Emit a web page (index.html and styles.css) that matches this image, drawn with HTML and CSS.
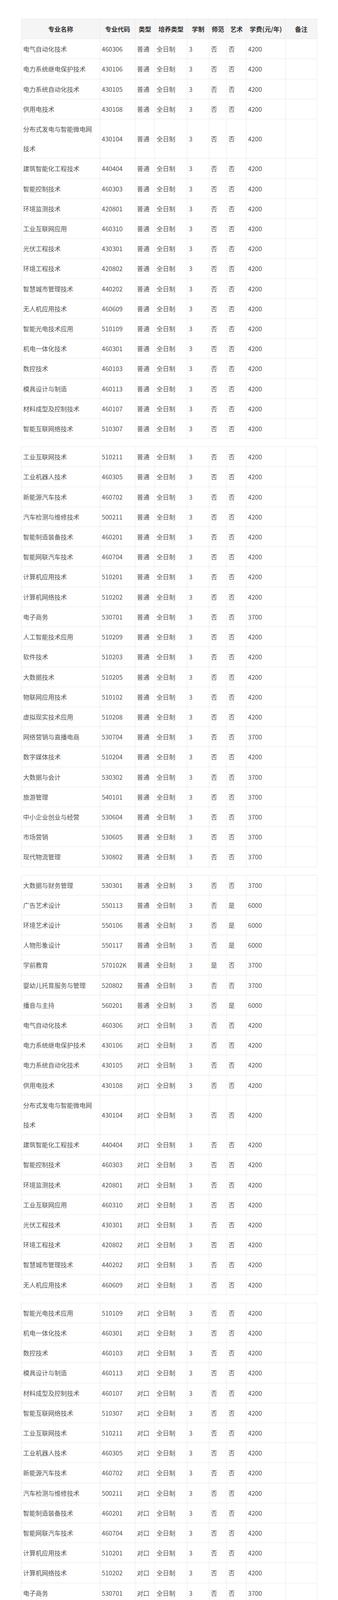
FILE: index.html
```html
<!DOCTYPE html>
<html lang="zh-CN">
<head>
<meta charset="utf-8">
<title>专业列表</title>
<link rel="stylesheet" href="styles.css">
</head>
<body>
<div class="page">

<table class="grid">
<colgroup><col class="c1"><col class="c2"><col class="c3"><col class="c4"><col class="c5"><col class="c6"><col class="c7"><col class="c8"><col class="c9"></colgroup>
<thead><tr><th>专业名称</th><th>专业代码</th><th>类型</th><th>培养类型</th><th>学制</th><th>师范</th><th>艺术</th><th>学费(元/年)</th><th>备注</th></tr></thead>
<tbody>
<tr><td>电气自动化技术</td><td>460306</td><td>普通</td><td>全日制</td><td>3</td><td>否</td><td>否</td><td>4200</td><td></td></tr>
<tr><td>电力系统继电保护技术</td><td>430106</td><td>普通</td><td>全日制</td><td>3</td><td>否</td><td>否</td><td>4200</td><td></td></tr>
<tr><td>电力系统自动化技术</td><td>430105</td><td>普通</td><td>全日制</td><td>3</td><td>否</td><td>否</td><td>4200</td><td></td></tr>
<tr><td>供用电技术</td><td>430108</td><td>普通</td><td>全日制</td><td>3</td><td>否</td><td>否</td><td>4200</td><td></td></tr>
<tr><td>分布式发电与智能微电网技术</td><td>430104</td><td>普通</td><td>全日制</td><td>3</td><td>否</td><td>否</td><td>4200</td><td></td></tr>
<tr><td>建筑智能化工程技术</td><td>440404</td><td>普通</td><td>全日制</td><td>3</td><td>否</td><td>否</td><td>4200</td><td></td></tr>
<tr><td>智能控制技术</td><td>460303</td><td>普通</td><td>全日制</td><td>3</td><td>否</td><td>否</td><td>4200</td><td></td></tr>
<tr><td>环境监测技术</td><td>420801</td><td>普通</td><td>全日制</td><td>3</td><td>否</td><td>否</td><td>4200</td><td></td></tr>
<tr><td>工业互联网应用</td><td>460310</td><td>普通</td><td>全日制</td><td>3</td><td>否</td><td>否</td><td>4200</td><td></td></tr>
<tr><td>光伏工程技术</td><td>430301</td><td>普通</td><td>全日制</td><td>3</td><td>否</td><td>否</td><td>4200</td><td></td></tr>
<tr><td>环境工程技术</td><td>420802</td><td>普通</td><td>全日制</td><td>3</td><td>否</td><td>否</td><td>4200</td><td></td></tr>
<tr><td>智慧城市管理技术</td><td>440202</td><td>普通</td><td>全日制</td><td>3</td><td>否</td><td>否</td><td>4200</td><td></td></tr>
<tr><td>无人机应用技术</td><td>460609</td><td>普通</td><td>全日制</td><td>3</td><td>否</td><td>否</td><td>4200</td><td></td></tr>
<tr><td>智能光电技术应用</td><td>510109</td><td>普通</td><td>全日制</td><td>3</td><td>否</td><td>否</td><td>4200</td><td></td></tr>
<tr><td>机电一体化技术</td><td>460301</td><td>普通</td><td>全日制</td><td>3</td><td>否</td><td>否</td><td>4200</td><td></td></tr>
<tr><td>数控技术</td><td>460103</td><td>普通</td><td>全日制</td><td>3</td><td>否</td><td>否</td><td>4200</td><td></td></tr>
<tr><td>模具设计与制造</td><td>460113</td><td>普通</td><td>全日制</td><td>3</td><td>否</td><td>否</td><td>4200</td><td></td></tr>
<tr><td>材料成型及控制技术</td><td>460107</td><td>普通</td><td>全日制</td><td>3</td><td>否</td><td>否</td><td>4200</td><td></td></tr>
<tr><td>智能互联网络技术</td><td>510307</td><td>普通</td><td>全日制</td><td>3</td><td>否</td><td>否</td><td>4200</td><td></td></tr>
</tbody>
</table>

<table class="grid">
<colgroup><col class="c1"><col class="c2"><col class="c3"><col class="c4"><col class="c5"><col class="c6"><col class="c7"><col class="c8"><col class="c9"></colgroup>
<tbody>
<tr><td>工业互联网技术</td><td>510211</td><td>普通</td><td>全日制</td><td>3</td><td>否</td><td>否</td><td>4200</td><td></td></tr>
<tr><td>工业机器人技术</td><td>460305</td><td>普通</td><td>全日制</td><td>3</td><td>否</td><td>否</td><td>4200</td><td></td></tr>
<tr><td>新能源汽车技术</td><td>460702</td><td>普通</td><td>全日制</td><td>3</td><td>否</td><td>否</td><td>4200</td><td></td></tr>
<tr><td>汽车检测与维修技术</td><td>500211</td><td>普通</td><td>全日制</td><td>3</td><td>否</td><td>否</td><td>4200</td><td></td></tr>
<tr><td>智能制造装备技术</td><td>460201</td><td>普通</td><td>全日制</td><td>3</td><td>否</td><td>否</td><td>4200</td><td></td></tr>
<tr><td>智能网联汽车技术</td><td>460704</td><td>普通</td><td>全日制</td><td>3</td><td>否</td><td>否</td><td>4200</td><td></td></tr>
<tr><td>计算机应用技术</td><td>510201</td><td>普通</td><td>全日制</td><td>3</td><td>否</td><td>否</td><td>4200</td><td></td></tr>
<tr><td>计算机网络技术</td><td>510202</td><td>普通</td><td>全日制</td><td>3</td><td>否</td><td>否</td><td>4200</td><td></td></tr>
<tr><td>电子商务</td><td>530701</td><td>普通</td><td>全日制</td><td>3</td><td>否</td><td>否</td><td>3700</td><td></td></tr>
<tr><td>人工智能技术应用</td><td>510209</td><td>普通</td><td>全日制</td><td>3</td><td>否</td><td>否</td><td>4200</td><td></td></tr>
<tr><td>软件技术</td><td>510203</td><td>普通</td><td>全日制</td><td>3</td><td>否</td><td>否</td><td>4200</td><td></td></tr>
<tr><td>大数据技术</td><td>510205</td><td>普通</td><td>全日制</td><td>3</td><td>否</td><td>否</td><td>4200</td><td></td></tr>
<tr><td>物联网应用技术</td><td>510102</td><td>普通</td><td>全日制</td><td>3</td><td>否</td><td>否</td><td>4200</td><td></td></tr>
<tr><td>虚拟现实技术应用</td><td>510208</td><td>普通</td><td>全日制</td><td>3</td><td>否</td><td>否</td><td>4200</td><td></td></tr>
<tr><td>网络营销与直播电商</td><td>530704</td><td>普通</td><td>全日制</td><td>3</td><td>否</td><td>否</td><td>3700</td><td></td></tr>
<tr><td>数字媒体技术</td><td>510204</td><td>普通</td><td>全日制</td><td>3</td><td>否</td><td>否</td><td>4200</td><td></td></tr>
<tr><td>大数据与会计</td><td>530302</td><td>普通</td><td>全日制</td><td>3</td><td>否</td><td>否</td><td>3700</td><td></td></tr>
<tr><td>旅游管理</td><td>540101</td><td>普通</td><td>全日制</td><td>3</td><td>否</td><td>否</td><td>3700</td><td></td></tr>
<tr><td>中小企业创业与经营</td><td>530604</td><td>普通</td><td>全日制</td><td>3</td><td>否</td><td>否</td><td>3700</td><td></td></tr>
<tr><td>市场营销</td><td>530605</td><td>普通</td><td>全日制</td><td>3</td><td>否</td><td>否</td><td>3700</td><td></td></tr>
<tr><td>现代物流管理</td><td>530802</td><td>普通</td><td>全日制</td><td>3</td><td>否</td><td>否</td><td>3700</td><td></td></tr>
</tbody>
</table>

<table class="grid">
<colgroup><col class="c1"><col class="c2"><col class="c3"><col class="c4"><col class="c5"><col class="c6"><col class="c7"><col class="c8"><col class="c9"></colgroup>
<tbody>
<tr><td>大数据与财务管理</td><td>530301</td><td>普通</td><td>全日制</td><td>3</td><td>否</td><td>否</td><td>3700</td><td></td></tr>
<tr><td>广告艺术设计</td><td>550113</td><td>普通</td><td>全日制</td><td>3</td><td>否</td><td>是</td><td>6000</td><td></td></tr>
<tr><td>环境艺术设计</td><td>550106</td><td>普通</td><td>全日制</td><td>3</td><td>否</td><td>是</td><td>6000</td><td></td></tr>
<tr><td>人物形象设计</td><td>550117</td><td>普通</td><td>全日制</td><td>3</td><td>否</td><td>是</td><td>6000</td><td></td></tr>
<tr><td>学前教育</td><td>570102K</td><td>普通</td><td>全日制</td><td>3</td><td>是</td><td>否</td><td>3700</td><td></td></tr>
<tr><td>婴幼儿托育服务与管理</td><td>520802</td><td>普通</td><td>全日制</td><td>3</td><td>否</td><td>否</td><td>3700</td><td></td></tr>
<tr><td>播音与主持</td><td>560201</td><td>普通</td><td>全日制</td><td>3</td><td>否</td><td>是</td><td>6000</td><td></td></tr>
<tr><td>电气自动化技术</td><td>460306</td><td>对口</td><td>全日制</td><td>3</td><td>否</td><td>否</td><td>4200</td><td></td></tr>
<tr><td>电力系统继电保护技术</td><td>430106</td><td>对口</td><td>全日制</td><td>3</td><td>否</td><td>否</td><td>4200</td><td></td></tr>
<tr><td>电力系统自动化技术</td><td>430105</td><td>对口</td><td>全日制</td><td>3</td><td>否</td><td>否</td><td>4200</td><td></td></tr>
<tr><td>供用电技术</td><td>430108</td><td>对口</td><td>全日制</td><td>3</td><td>否</td><td>否</td><td>4200</td><td></td></tr>
<tr><td>分布式发电与智能微电网技术</td><td>430104</td><td>对口</td><td>全日制</td><td>3</td><td>否</td><td>否</td><td>4200</td><td></td></tr>
<tr><td>建筑智能化工程技术</td><td>440404</td><td>对口</td><td>全日制</td><td>3</td><td>否</td><td>否</td><td>4200</td><td></td></tr>
<tr><td>智能控制技术</td><td>460303</td><td>对口</td><td>全日制</td><td>3</td><td>否</td><td>否</td><td>4200</td><td></td></tr>
<tr><td>环境监测技术</td><td>420801</td><td>对口</td><td>全日制</td><td>3</td><td>否</td><td>否</td><td>4200</td><td></td></tr>
<tr><td>工业互联网应用</td><td>460310</td><td>对口</td><td>全日制</td><td>3</td><td>否</td><td>否</td><td>4200</td><td></td></tr>
<tr><td>光伏工程技术</td><td>430301</td><td>对口</td><td>全日制</td><td>3</td><td>否</td><td>否</td><td>4200</td><td></td></tr>
<tr><td>环境工程技术</td><td>420802</td><td>对口</td><td>全日制</td><td>3</td><td>否</td><td>否</td><td>4200</td><td></td></tr>
<tr><td>智慧城市管理技术</td><td>440202</td><td>对口</td><td>全日制</td><td>3</td><td>否</td><td>否</td><td>4200</td><td></td></tr>
<tr><td>无人机应用技术</td><td>460609</td><td>对口</td><td>全日制</td><td>3</td><td>否</td><td>否</td><td>4200</td><td></td></tr>
</tbody>
</table>

<table class="grid">
<colgroup><col class="c1"><col class="c2"><col class="c3"><col class="c4"><col class="c5"><col class="c6"><col class="c7"><col class="c8"><col class="c9"></colgroup>
<tbody>
<tr><td>智能光电技术应用</td><td>510109</td><td>对口</td><td>全日制</td><td>3</td><td>否</td><td>否</td><td>4200</td><td></td></tr>
<tr><td>机电一体化技术</td><td>460301</td><td>对口</td><td>全日制</td><td>3</td><td>否</td><td>否</td><td>4200</td><td></td></tr>
<tr><td>数控技术</td><td>460103</td><td>对口</td><td>全日制</td><td>3</td><td>否</td><td>否</td><td>4200</td><td></td></tr>
<tr><td>模具设计与制造</td><td>460113</td><td>对口</td><td>全日制</td><td>3</td><td>否</td><td>否</td><td>4200</td><td></td></tr>
<tr><td>材料成型及控制技术</td><td>460107</td><td>对口</td><td>全日制</td><td>3</td><td>否</td><td>否</td><td>4200</td><td></td></tr>
<tr><td>智能互联网络技术</td><td>510307</td><td>对口</td><td>全日制</td><td>3</td><td>否</td><td>否</td><td>4200</td><td></td></tr>
<tr><td>工业互联网技术</td><td>510211</td><td>对口</td><td>全日制</td><td>3</td><td>否</td><td>否</td><td>4200</td><td></td></tr>
<tr><td>工业机器人技术</td><td>460305</td><td>对口</td><td>全日制</td><td>3</td><td>否</td><td>否</td><td>4200</td><td></td></tr>
<tr><td>新能源汽车技术</td><td>460702</td><td>对口</td><td>全日制</td><td>3</td><td>否</td><td>否</td><td>4200</td><td></td></tr>
<tr><td>汽车检测与维修技术</td><td>500211</td><td>对口</td><td>全日制</td><td>3</td><td>否</td><td>否</td><td>4200</td><td></td></tr>
<tr><td>智能制造装备技术</td><td>460201</td><td>对口</td><td>全日制</td><td>3</td><td>否</td><td>否</td><td>4200</td><td></td></tr>
<tr><td>智能网联汽车技术</td><td>460704</td><td>对口</td><td>全日制</td><td>3</td><td>否</td><td>否</td><td>4200</td><td></td></tr>
<tr><td>计算机应用技术</td><td>510201</td><td>对口</td><td>全日制</td><td>3</td><td>否</td><td>否</td><td>4200</td><td></td></tr>
<tr><td>计算机网络技术</td><td>510202</td><td>对口</td><td>全日制</td><td>3</td><td>否</td><td>否</td><td>4200</td><td></td></tr>
<tr><td>电子商务</td><td>530701</td><td>对口</td><td>全日制</td><td>3</td><td>否</td><td>否</td><td>3700</td><td></td></tr>
<tr><td>人工智能技术应用</td><td>510209</td><td>对口</td><td>全日制</td><td>3</td><td>否</td><td>否</td><td>4200</td><td></td></tr>
<tr><td>软件技术</td><td>510203</td><td>对口</td><td>全日制</td><td>3</td><td>否</td><td>否</td><td>4200</td><td></td></tr>
<tr><td>大数据技术</td><td>510205</td><td>对口</td><td>全日制</td><td>3</td><td>否</td><td>否</td><td>4200</td><td></td></tr>
<tr><td>物联网应用技术</td><td>510102</td><td>对口</td><td>全日制</td><td>3</td><td>否</td><td>否</td><td>4200</td><td></td></tr>
<tr><td>虚拟现实技术应用</td><td>510208</td><td>对口</td><td>全日制</td><td>3</td><td>否</td><td>否</td><td>4200</td><td></td></tr>
<tr><td>网络营销与直播电商</td><td>530704</td><td>对口</td><td>全日制</td><td>3</td><td>否</td><td>否</td><td>3700</td><td></td></tr>
</tbody>
</table>

<table class="grid">
<colgroup><col class="c1"><col class="c2"><col class="c3"><col class="c4"><col class="c5"><col class="c6"><col class="c7"><col class="c8"><col class="c9"></colgroup>
<tbody>
<tr><td>数字媒体技术</td><td>510204</td><td>对口</td><td>全日制</td><td>3</td><td>否</td><td>否</td><td>4200</td><td></td></tr>
<tr><td>大数据与会计</td><td>530302</td><td>对口</td><td>全日制</td><td>3</td><td>否</td><td>否</td><td>3700</td><td></td></tr>
<tr><td>旅游管理</td><td>540101</td><td>对口</td><td>全日制</td><td>3</td><td>否</td><td>否</td><td>3700</td><td></td></tr>
<tr><td>中小企业创业与经营</td><td>530604</td><td>对口</td><td>全日制</td><td>3</td><td>否</td><td>否</td><td>3700</td><td></td></tr>
<tr><td>市场营销</td><td>530605</td><td>对口</td><td>全日制</td><td>3</td><td>否</td><td>否</td><td>3700</td><td></td></tr>
<tr><td>现代物流管理</td><td>530802</td><td>对口</td><td>全日制</td><td>3</td><td>否</td><td>否</td><td>3700</td><td></td></tr>
<tr><td>大数据与财务管理</td><td>530301</td><td>对口</td><td>全日制</td><td>3</td><td>否</td><td>否</td><td>3700</td><td></td></tr>
<tr><td>广告艺术设计</td><td>550113</td><td>对口</td><td>全日制</td><td>3</td><td>否</td><td>是</td><td>6000</td><td></td></tr>
<tr><td>环境艺术设计</td><td>550106</td><td>对口</td><td>全日制</td><td>3</td><td>否</td><td>是</td><td>6000</td><td></td></tr>
<tr><td>学前教育</td><td>570102K</td><td>对口</td><td>全日制</td><td>3</td><td>是</td><td>否</td><td>3700</td><td></td></tr>
<tr><td>婴幼儿托育服务与管理</td><td>520802</td><td>对口</td><td>全日制</td><td>3</td><td>否</td><td>否</td><td>3700</td><td></td></tr>
<tr><td>播音与主持</td><td>560201</td><td>对口</td><td>全日制</td><td>3</td><td>否</td><td>是</td><td>6000</td><td></td></tr>
<tr><td>人物形象设计</td><td>550117</td><td>对口</td><td>全日制</td><td>3</td><td>否</td><td>是</td><td>6000</td><td></td></tr>
</tbody>
</table>

</div>
</body>
</html>
```

FILE: styles.css
```css
html, body {
  margin: 0;
  padding: 0;
  background: #ffffff;
}

.page {
  padding: 48px 54px 46px 54px;
  font-family: "Noto Sans CJK SC", "Noto Sans", sans-serif;
  font-size: 16px;
  color: #555555;
}

.grid {
  width: 756px;
  table-layout: fixed;
  border-collapse: collapse;
  margin: 0 0 20px 0;
  border: 1px solid #e8e8e8;
}

.grid:last-child {
  margin-bottom: 0;
}

.c1 { width: 201px; }
.c2 { width: 90px; }
.c3 { width: 50px; }
.c4 { width: 83px; }
.c5 { width: 56px; }
.c6 { width: 45px; }
.c7 { width: 50px; }
.c8 { width: 100px; }
.c9 { width: 81px; }

.grid th,
.grid td {
  border: 1px solid #e8e8e8;
  line-height: 50.2px;
  padding: 0 6px 0 4px;
  vertical-align: middle;
  white-space: normal;
}

.grid th {
  background: #f5f5f5;
  color: #333333;
  font-weight: 700;
  text-align: center;
  padding: 0 2px;
  white-space: nowrap;
}

.grid td {
  text-align: left;
  color: #555555;
}
```
